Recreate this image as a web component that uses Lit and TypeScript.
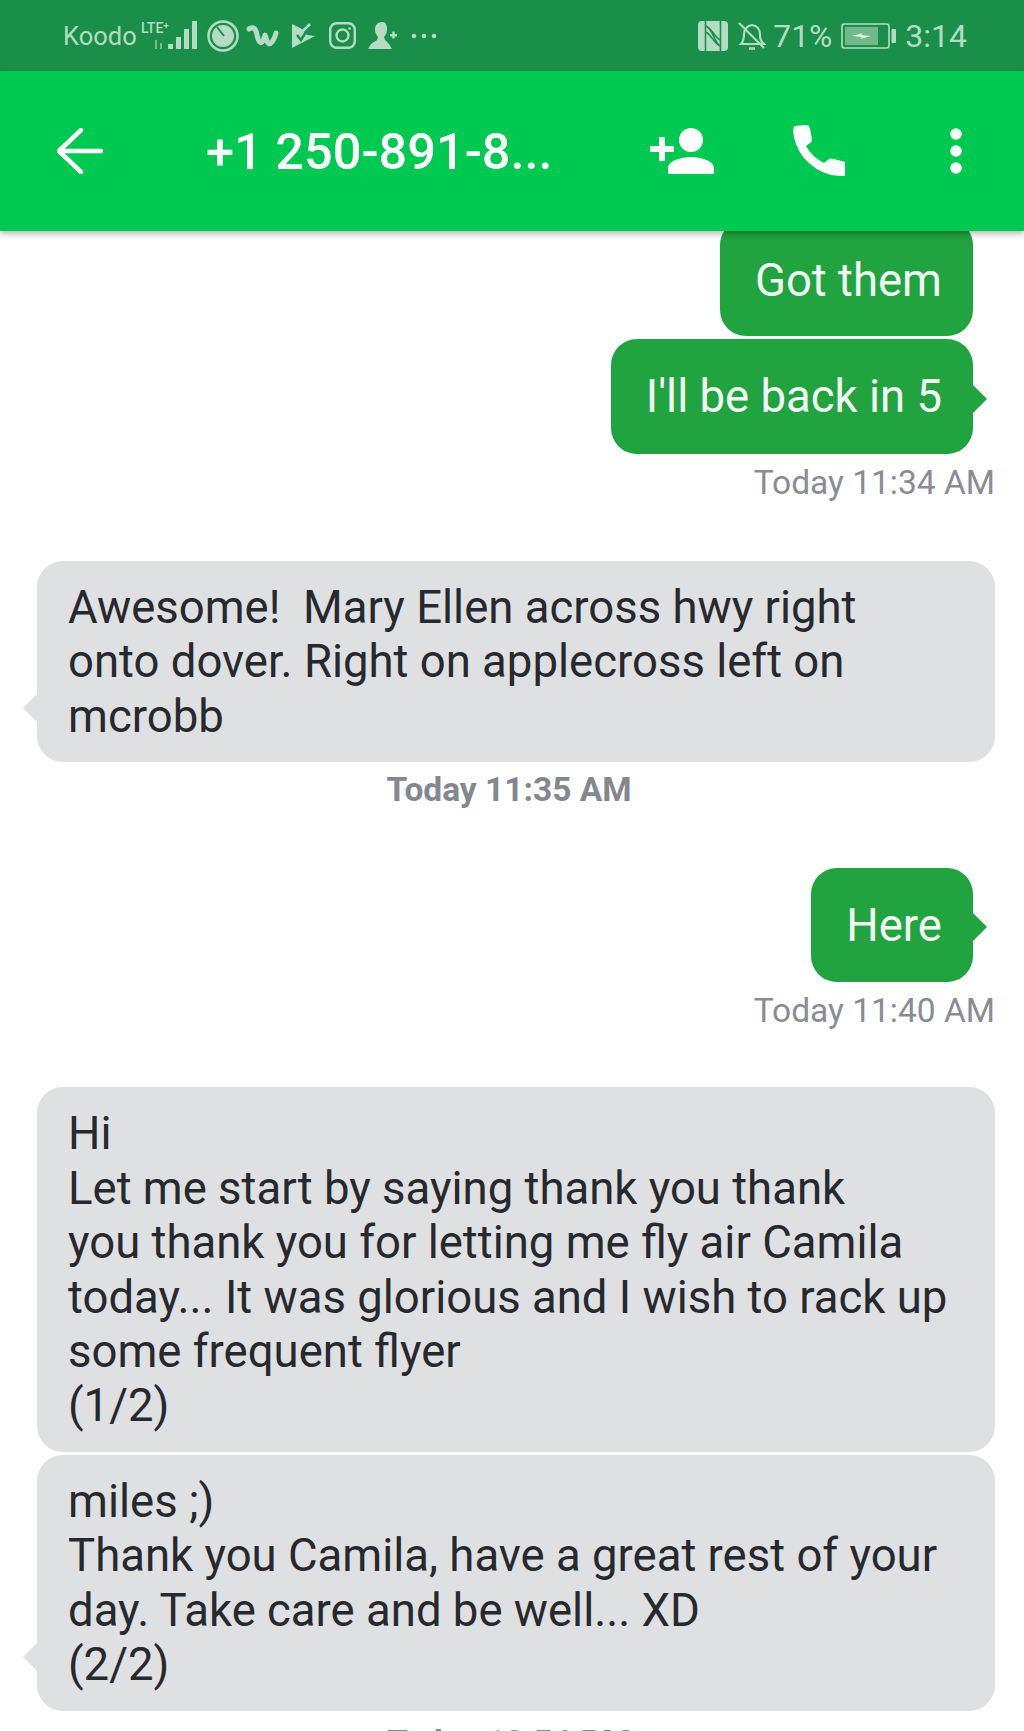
import { LitElement, html, css } from "lit";
import { customElement } from "lit/decorators.js";

const F = "#b5dcc3";
const BG = "#1a8f49";

@customElement("app-root")
export class AppRoot extends LitElement {
  static styles = css`
    :host { display: block; width: 1024px; height: 1731px; overflow: hidden; background: #fff; font-family: Roboto, "Noto Sans", sans-serif; }
    * { box-sizing: border-box; }
    .status { height: 71px; background: #1a8f49; display: flex; align-items: center; justify-content: space-between; padding: 0 57px 0 63px; color: #b5dcc3; }
    .group { display: flex; align-items: center; }
    .group svg { display: block; flex: none; }
    .carrier { font-size: 25.5px; width: 72px; margin-right: 6px; white-space: nowrap; }
    .pct { font-size: 31.8px; margin: 0 9px 0 7px; }
    .clock { font-size: 32px; margin-left: 9px; }
    .bar { position: relative; z-index: 2; height: 160px; background: #00c951; display: flex; align-items: center; color: #fff; padding-left: 57px; box-shadow: 0 3px 6px rgba(0,0,0,.28); }
    .bar svg { display: block; flex: none; }
    .title { font-size: 50.5px; font-weight: 500; width: 547px; padding-left: 103px; white-space: nowrap; flex: none; }
    .list { display: flex; flex-direction: column; margin-top: -12px; padding: 0 29px 0 37px; }
    .bubble { border-radius: 26px; font-size: 45.5px; line-height: 54.4px; position: relative; }
    .out { align-self: flex-end; margin-right: 22px; background: #21a340; color: #f2faf4; padding: 31px 31px 29px 35px; margin-bottom: 3px; }
    .first { padding-top: 35px; padding-bottom: 28px; }
    .in { background: #dfe0e2; color: #26292d; padding: 20px 30px 18px 31px; margin-bottom: 3px; }
    .tail::after { content: ""; position: absolute; top: 50%; width: 0; height: 0; border-top: 14px solid transparent; border-bottom: 14px solid transparent; }
    .out.tail::after { left: 100%; margin-top: -12px; border-left: 14px solid #21a340; }
    .in.tail::after { right: 100%; top: auto; bottom: 40px; border-right: 14px solid #dfe0e2; }
    .stamp { color: #898c93; font-size: 33.5px; line-height: 40px; align-self: flex-end; margin-top: 6px; margin-bottom: 58px; }
    .stamp.tight { margin-bottom: 56px; }
    .stamp.bold { align-self: center; font-weight: 700; margin: 5px 14px 58px 0; color: #84888e; }
    .stamp.last { margin: 9px 14px 0 0; }
  `;

  private statusLeft() {
    return html`
      <span class="carrier">Koodo</span>
      <svg width="58" height="34" viewBox="0 0 58 34" fill="${F}">
        <text x="0" y="14" font-size="15" font-weight="500" font-family="Roboto" textLength="28" lengthAdjust="spacingAndGlyphs">LTE⁺</text>
        <path d="M15 21v9M20 24v6" stroke="#6fbb8b" stroke-width="2"/>
        <rect x="27" y="25" width="5" height="5"/><rect x="35" y="18" width="5" height="12"/><rect x="43" y="10" width="5" height="20"/><rect x="51" y="2" width="5" height="28"/>
      </svg>
      <svg width="34" height="34" viewBox="0 0 34 34" style="margin-left:7px">
        <circle cx="17" cy="17" r="14.5" fill="none" stroke="${F}" stroke-width="2.5"/>
        <circle cx="17" cy="17" r="11" fill="${F}"/><path d="M11 8l7 9" stroke="${BG}" stroke-width="2"/>
      </svg>
      <svg width="33" height="24" viewBox="0 0 33 24" style="margin-left:6px" fill="none" stroke="${F}" stroke-width="5" stroke-linecap="round" stroke-linejoin="round">
        <path d="M3 5q5-3 7 2l2 8q2 6 5 2l2-6 2 6q2 5 5 1 3-4 4-9"/>
      </svg>
      <svg width="24" height="26" viewBox="0 0 24 26" style="margin-left:13px">
        <path d="M0 1l10 5 5 6 8 1L0 25z" fill="${F}"/>
        <path d="M5 12l4 5 8-13" fill="none" stroke="${BG}" stroke-width="2.500"/>
        <path d="M11 8l7-7" fill="none" stroke="${F}" stroke-width="2.500"/>
      </svg>
      <svg width="27" height="27" viewBox="0 0 27 27" style="margin-left:13px" fill="none" stroke="${F}" stroke-width="2.4">
        <rect x="1.2" y="1.2" width="24.6" height="24.6" rx="6.500"/><circle cx="13.500" cy="13.500" r="6"/><circle cx="20.500" cy="6.500" r="1.300" fill="${F}" stroke="none"/>
      </svg>
      <svg width="30" height="28" viewBox="0 0 30 28" style="margin-left:12px" fill="${F}">
        <path d="M14 0c4 0 5 3 5 7 0 3-1 6-3 8l1 3 4 4 3 5H0l3-5 6-4 1-3c-2-2-3-5-3-8 0-4 3-7 7-7z"/><path d="M22 12h7v2.400h-7zM24.300 9.500h2.400v7h-2.400z"/>
      </svg>
      <svg width="26" height="6" viewBox="0 0 26 6" style="margin-left:13px" fill="${F}"><circle cx="3" cy="3" r="2.300"/><circle cx="13" cy="3" r="2.300"/><circle cx="23" cy="3" r="2.300"/></svg>
    `;
  }

  private statusRight() {
    return html`
      <svg width="30" height="30" viewBox="0 0 30 30">
        <rect width="30" height="30" rx="4" fill="${F}"/>
        <path d="M7.500 0v30M22.500 0v30" stroke="${BG}" stroke-width="1.600" fill="none"/>
        <path d="M8 5c7 3 8 16 14 20M8 11c5 3 8 11 14 14M8 5c6 3 9 11 14 14" fill="none" stroke="${BG}" stroke-width="1.600"/>
      </svg>
      <svg width="28" height="30" viewBox="0 0 28 30" style="margin-left:10px" fill="none" stroke="${F}" stroke-width="2.200">
        <path d="M3 23c3-3 3-6 3-10 0-5 3-8 8-9 5 1 8 4 8 9 0 4 0 7 4 10z"/><path d="M11 27.500h6" stroke-width="2.500"/><path d="M1 2l25 25"/>
      </svg>
      <span class="pct">71%</span>
      <svg width="55" height="26" viewBox="0 0 55 26">
        <rect x="1" y="1" width="47" height="24" rx="2.500" fill="none" stroke="${F}" stroke-width="1.600"/>
        <rect x="4" y="4" width="33" height="18" fill="#6fb98a"/>
        <path d="M11 13l11-3-2 2 10 1-11 3 2-2z" fill="#e2f2e7"/>
        <rect x="50.500" y="6" width="4.500" height="14" rx="1" fill="${F}"/>
      </svg>
      <span class="clock">3:14</span>
    `;
  }

  render() {
    return html`
      <div class="status">
        <div class="group">${this.statusLeft()}</div>
        <div class="group">${this.statusRight()}</div>
      </div>
      <div class="bar">
        <svg width="46" height="46" viewBox="0 0 46 46" fill="none" stroke="#fff" stroke-width="4.500" stroke-linecap="round" stroke-linejoin="round"><path d="M2 23h42M24 2L2 23l22 21"/></svg>
        <div class="title">+1 250-891-8...</div>
        <svg width="65" height="48" viewBox="0 0 65 48" fill="#fff"><circle cx="41" cy="13" r="12"/><path d="M18 47v-6c0-7 13-11 23-11s23 4 23 11v6zM0 19h9V10h6v9h9v6h-9v9H9v-9H0z"/></svg>
        <svg width="54" height="52" viewBox="0 0 54 52" fill="#fff" style="margin-left:78px"><path d="M1 1L14 0Q16 0 17 4L19 14Q19 17 17 18L13 21Q19 32 31 38L36 34Q38 33 41 34L52 37L52 51Q44 51 38 50Q22 46 10 32Q1 19 0 6Z"/></svg>
        <svg width="12" height="46" viewBox="0 0 12 46" fill="#fff" style="margin-left:103px"><circle cx="6" cy="6" r="5.800"/><circle cx="6" cy="23" r="5.800"/><circle cx="6" cy="40" r="5.800"/></svg>
      </div>
      <div class="list">
        <div class="bubble out first">Got them</div>
        <div class="bubble out tail">I'll be back in 5</div>
        <div class="stamp">Today 11:34 AM</div>
        <div class="bubble in tail">Awesome!&nbsp; Mary Ellen across hwy right<br>onto dover. Right on applecross left on<br>mcrobb</div>
        <div class="stamp bold">Today 11:35 AM</div>
        <div class="bubble out tail">Here</div>
        <div class="stamp tight">Today 11:40 AM</div>
        <div class="bubble in">Hi<br>Let me start by saying thank you thank<br>you thank you for letting me fly air Camila<br>today... It was glorious and I wish to rack up<br>some frequent flyer<br>(1/2)</div>
        <div class="bubble in tail">miles ;)<br>Thank you Camila, have a great rest of your<br>day. Take care and be well... XD<br>(2/2)</div>
        <div class="stamp bold last">Today 12:56 PM</div>
      </div>
    `;
  }
}
